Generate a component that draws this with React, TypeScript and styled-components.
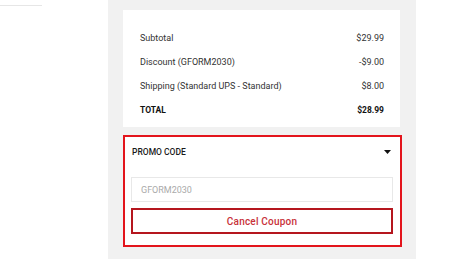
import { createGlobalStyle } from 'styled-components';
import styled from 'styled-components';

const GlobalStyle = createGlobalStyle`
  html, body {
    margin: 0;
    padding: 0;
    background: #ffffff;
    font-family: Roboto, "Liberation Sans", sans-serif;
  }
`;

const Page = styled.div`
  display: flex;
  width: 474px;
  height: 259px;
  overflow: hidden;
`;

const LeftColumn = styled.div`
  width: 108px;
  padding-top: 5px;
  box-sizing: border-box;
`;

const Rule = styled.div`
  width: 42px;
  height: 1px;
  background: #e6e6e6;
`;

const Panel = styled.div`
  width: 308px;
  background: #f1f1f1;
  padding: 10px 14px 0 15px;
  box-sizing: border-box;
  display: flex;
  flex-direction: column;
  gap: 8px;
`;

const SummaryCard = styled.div`
  background: #ffffff;
  width: 277px;
  height: 117px;
  box-sizing: border-box;
  padding: 16px 16px 0 17px;
  display: flex;
  flex-direction: column;
`;

const Row = styled.div<{ $bold?: boolean }>`
  display: flex;
  justify-content: space-between;
  align-items: center;
  height: 24px;
  font-size: ${(p) => (p.$bold ? '8.5px' : '9px')};
  font-weight: ${(p) => (p.$bold ? 700 : 400)};
  color: ${(p) => (p.$bold ? '#111' : '#333')};
`;

const PromoBox = styled.div`
  width: 279px;
  height: 112px;
  box-sizing: border-box;
  border: 2px solid #e3141c;
  background: #ffffff;
  padding: 0 7px 0 6px;
  display: flex;
  flex-direction: column;
`;

const PromoHeader = styled.div`
  display: flex;
  justify-content: space-between;
  align-items: center;
  height: 30px;
  margin-bottom: 10px;
  padding: 0 2px 0 1px;
`;

const PromoTitle = styled.span`
  font-size: 8.5px;
  font-weight: 500;
  color: #1a1a1a;
`;

const Caret = styled.svg`
  width: 7px;
  height: 4px;
`;

const CodeInput = styled.input`
  height: 25px;
  box-sizing: border-box;
  border: 1px solid #e8e8e8;
  background: #fff;
  padding: 0 9px;
  font-family: Roboto, "Liberation Sans", sans-serif;
  font-size: 9px;
  color: #999;
  outline: none;
  &::placeholder {
    color: #aaa;
  }
`;

const CancelButton = styled.button`
  margin-top: 6px;
  height: 26px;
  box-sizing: border-box;
  border: 2px solid #b5161e;
  background: #fff;
  color: #c8323a;
  font-family: Roboto, "Liberation Sans", sans-serif;
  font-size: 10px;
  font-weight: 500;
  letter-spacing: 0.2px;
  cursor: pointer;
`;

const lines = [
  { label: 'Subtotal', value: '$29.99' },
  { label: 'Discount (GFORM2030)', value: '-$9.00' },
  { label: 'Shipping (Standard UPS - Standard)', value: '$8.00' },
];

const App = () => {
  return (
    <>
      <GlobalStyle />
      <Page>
        <LeftColumn>
          <Rule />
        </LeftColumn>
        <Panel>
          <SummaryCard>
            {lines.map((line) => (
              <Row key={line.label}>
                <span>{line.label}</span>
                <span>{line.value}</span>
              </Row>
            ))}
            <Row $bold>
              <span>TOTAL</span>
              <span>$28.99</span>
            </Row>
          </SummaryCard>
          <PromoBox>
            <PromoHeader>
              <PromoTitle>PROMO CODE</PromoTitle>
              <Caret viewBox="0 0 7 4">
                <path d="M0 0 L7 0 L3.5 4 Z" fill="#111" />
              </Caret>
            </PromoHeader>
            <CodeInput placeholder="GFORM2030" />
            <CancelButton type="button">Cancel Coupon</CancelButton>
          </PromoBox>
        </Panel>
      </Page>
    </>
  );
};

export default App;
